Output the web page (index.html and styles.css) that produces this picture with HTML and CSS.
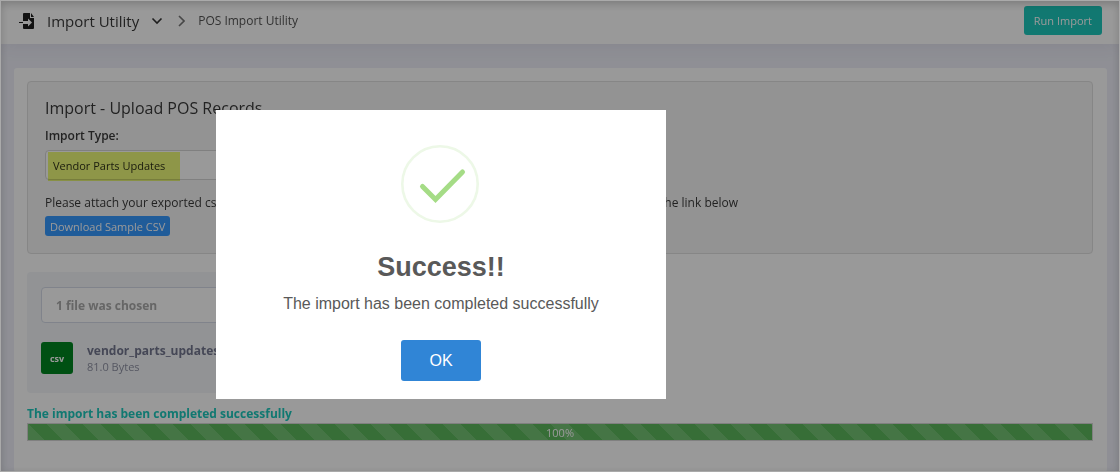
FILE: index.html
```html
<!DOCTYPE html>
<html lang="en">
<head>
<meta charset="utf-8">
<title>POS Import Utility</title>
<link rel="stylesheet" href="styles.css">
</head>
<body>
<header class="topbar">
  <svg class="topbar-icon" width="16" height="16" viewBox="0 0 16 16" aria-hidden="true">
    <path fill="#1e1e1e" d="M5 0h6v5h4v10q0 1-1 1H5q-1 0-1-1v-4h5v2.500l4-4-4-4V8H4V1q0-1 1-1z"/>
    <path fill="#1e1e1e" d="M12 0l3 4h-3zM0 9h4v1H0z"/>
  </svg>
  <h1 class="topbar-title">Import Utility</h1>
  <svg class="chevron-down" width="12" height="8" viewBox="0 0 12 8" aria-hidden="true"><path d="M1.500 1.500l4.500 4.500 4.500-4.500" fill="none" stroke="#333" stroke-width="1.600"/></svg>
  <svg class="chevron-right" width="7" height="12" viewBox="0 0 7 12" aria-hidden="true"><path d="M1 1l5 5-5 5" fill="none" stroke="#777" stroke-width="1.600"/></svg>
  <span class="crumb">POS Import Utility</span>
  <button class="btn btn-run" type="button">Run Import</button>
</header>
<main class="card">
  <section class="well">
    <h2 class="well-title">Import - Upload POS Records</h2>
    <label class="field-label" for="import-type">Import Type:</label>
    <div class="select-wrap">
      <select class="select" id="import-type"><option>Vendor Parts Updates</option></select>
    </div>
    <p class="help">Please attach your exported csv file. If you need an example of the required format, you can download it from the link below</p>
    <button class="btn btn-download" type="button">Download Sample CSV</button>
  </section>
  <section class="upload">
    <input class="file-input" type="text" value="1 file was chosen" aria-label="Chosen file" readonly>
    <div class="file">
      <span class="file-badge">csv</span>
      <div class="file-info">
        <strong class="file-name">vendor_parts_updates.csv</strong>
        <span class="file-size">81.0 Bytes</span>
      </div>
    </div>
  </section>
  <p class="status">The import has been completed successfully</p>
  <div class="progress" role="progressbar" aria-valuenow="100" aria-valuemin="0" aria-valuemax="100" aria-label="Import progress"><div class="progress-fill" style="width: 100%">100%</div></div>
</main>
<div class="overlay">
  <div class="modal" role="dialog" aria-modal="true" aria-labelledby="modal-title">
    <svg class="success" width="80" height="78" viewBox="0 0 80 78" aria-hidden="true">
      <circle cx="39" cy="39" r="37.7" fill="none" stroke="#edf8e7" stroke-width="2.6"/>
      <path d="M21.5 41.5L34.500 54.5 61.5 27" fill="none" stroke="#a5dc86" stroke-width="5" stroke-linecap="round"/>
    </svg>
    <h2 class="modal-title" id="modal-title">Success!!</h2>
    <p class="modal-text">The import has been completed successfully</p>
    <button class="modal-ok" type="button">OK</button>
  </div>
</div>
</body>
</html>
```
FILE: styles.css
```css
* { box-sizing: border-box; }
body {
  margin: 0;
  min-height: 100vh;
  display: flex;
  flex-direction: column;
  background: #eeeff8;
  color: #3a3a3a;
  font-family: "Open Sans", sans-serif;
  font-size: 12px;
  line-height: 18px;
}
h1, h2, p { margin: 0; font-weight: 400; }
button { border: 0; font-family: inherit; }
.topbar {
  display: flex;
  align-items: center;
  height: 44px;
  padding: 0 18px 3px 19px;
  background: #fff;
  box-shadow: 0 0 20px rgba(80, 60, 110, 0.1);
}
.topbar-title { margin-left: 12px; font-size: 15px; line-height: 20px; }
.chevron-down { margin-left: 12px; }
.chevron-right { margin-left: 15px; }
.crumb { margin-left: 13px; color: #555; }
.btn { border-radius: 3px; color: #fff; }
.btn-run {
  height: 29px;
  margin-left: auto;
  padding: 0 10px;
  background: #1dc9bd;
  font-size: 11px;
}
.card {
  flex: 1;
  margin: 24px 13px 0 14px;
  padding: 13px 14px 24px 13px;
  background: #fff;
  border-radius: 3px;
}
.well {
  padding: 15px 17px 17px;
  background: #f5f5f5;
  border: 1px solid #e0e0e0;
  border-radius: 4px;
}
.well-title { font-size: 16px; line-height: 22px; }
.field-label { display: block; margin: 8px 0 5px; font-weight: 600; }
.select-wrap { position: relative; width: 350px; }
.select-wrap::after {
  content: "";
  position: absolute;
  inset: 2px auto -1px 3px;
  width: 132px;
  background: #edfa78;
  mix-blend-mode: multiply;
}
.select {
  display: block;
  appearance: none;
  width: 100%;
  height: 30px;
  padding: 0 7px;
  border: 1px solid #d5d5d5;
  border-radius: 4px;
  background: #fff;
  color: #333;
  font-family: inherit;
  font-size: 11px;
}
.help { margin: 14px 0 4px; white-space: nowrap; }
.btn-download {
  display: block;
  height: 20px;
  padding: 0 5px;
  background: #3699ff;
  font-size: 11px;
}
.upload {
  width: 440px;
  margin-top: 18px;
  padding: 15px 14px 18px;
  background: #f3f6f9;
  border-radius: 4px;
}
.file-input {
  display: block;
  width: 100%;
  height: 36px;
  padding: 0 14px;
  border: 1px solid #d5dbe8;
  border-radius: 4px;
  background: #fff;
  color: #aaa;
  font-family: inherit;
  font-size: 12px;
  font-weight: 700;
}
.file { display: flex; align-items: center; gap: 14px; margin-top: 18px; }
.file-badge {
  width: 32px;
  height: 32px;
  border-radius: 3px;
  background: #008520;
  color: #fff;
  font-size: 9px;
  font-weight: 700;
  line-height: 34px;
  text-align: center;
}
.file-info { display: flex; flex-direction: column; padding-top: 2px; line-height: 16px; }
.file-name { color: #74778f; }
.file-size { color: #8f91a3; font-size: 11px; }
.status { margin-top: 12px; color: #1dc9bd; font-weight: 700; }
.progress { height: 18px; border: 1px solid #d5d5d5; }
.progress-fill {
  height: 100%;
  background: #5cb85c linear-gradient(45deg, rgba(255, 255, 255, 0.15) 25%, transparent 25%, transparent 50%, rgba(255, 255, 255, 0.15) 50%, rgba(255, 255, 255, 0.15) 75%, transparent 75%) 18px 0 / 36px 36px;
  color: #fff;
  font-size: 11px;
  line-height: 18px;
  text-align: center;
}
.overlay {
  position: fixed;
  inset: 0;
  background: rgba(0, 0, 0, 0.4);
  border: 1px solid #aaa;
  box-shadow: inset 0 3px 8px rgba(0, 0, 0, 0.2);
}
.modal {
  position: absolute;
  top: 109px;
  left: 215px;
  width: 450px;
  display: flex;
  flex-direction: column;
  align-items: center;
  padding: 35px 20px 18px;
  background: #fff;
  color: #595959;
  font-family: "Liberation Sans", sans-serif;
}
.modal-title { margin-top: 26px; font-size: 27px; font-weight: 700; line-height: 36px; }
.modal-text { margin-top: 9px; font-size: 16px; line-height: 20px; }
.modal-ok {
  height: 41px;
  margin-top: 26px;
  padding: 0 28px;
  border-radius: 3px;
  background: #3085d6;
  color: #fff;
  font-size: 16px;
}
```
